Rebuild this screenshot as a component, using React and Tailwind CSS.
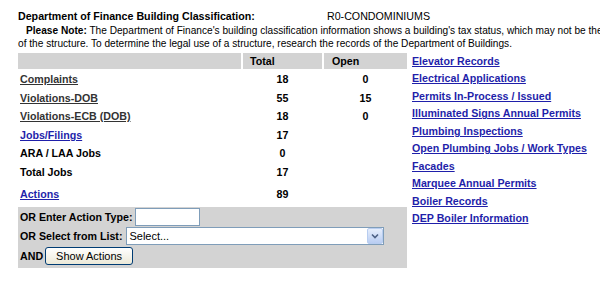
import { useState } from "react";

export default function App() {
  // filas de la tabla de resumen
  const rows = [
    { label: "Complaints", total: "18", open: "0", link: "gray" },
    { label: "Violations-DOB", total: "55", open: "15", link: "gray" },
    { label: "Violations-ECB (DOB)", total: "18", open: "0", link: "gray" },
    { label: "Jobs/Filings", total: "17", open: "", link: "blue" },
    { label: "ARA / LAA Jobs", total: "0", open: "", link: "" },
    { label: "Total Jobs", total: "17", open: "", link: "" },
  ];

  const links = [
    "Elevator Records",
    "Electrical Applications",
    "Permits In-Process / Issued",
    "Illuminated Signs Annual Permits",
    "Plumbing Inspections",
    "Open Plumbing Jobs / Work Types",
    "Facades",
    "Marquee Annual Permits",
    "Boiler Records",
    "DEP Boiler Information",
  ];

  const [actionType, setActionType] = useState("");
  const [selected, setSelected] = useState("");

  return (
    <div className="w-[600px] h-[293px] overflow-hidden bg-white pl-[18px] pt-[9px] font-['Liberation_Sans',Arial,sans-serif] text-black">
      <div className="flex h-[14px] items-center text-[8pt] leading-[14px]">
        <span className="w-[309px] font-bold">Department of Finance Building Classification:</span>
        <span>R0-CONDOMINIUMS</span>
      </div>

      <p className="mt-[1px] whitespace-nowrap text-[10.15px] leading-[13px]">
        <span className="pl-[8px] font-bold">Please Note:</span> The Department of Finance's building classification information shows a building's tax status, which may not be the legal use
        <br />
        of the structure. To determine the legal use of a structure, research the records of the Department of Buildings.
      </p>

      <div className="mt-[3px] flex gap-[5px] text-[8pt] font-bold">
        <div className="flex w-[389px] flex-col gap-[2px]">
          <div className="grid h-[16px] grid-cols-[223px_79px_83px] gap-x-[2px]">
            <div className="bg-[#d3d3d3]" />
            <div className="flex items-center bg-[#d3d3d3] pl-[7px]">Total</div>
            <div className="flex items-center bg-[#d3d3d3] pl-[8px]">Open</div>
          </div>

          {rows.map((r) => (
            <div key={r.label} className="grid h-[16.5px] grid-cols-[223px_79px_83px] items-center gap-x-[2px]">
              <div className="pl-[2px]">
                {r.link === "gray" && <a href="#" className="text-[#333333] underline">{r.label}</a>}
                {r.link === "blue" && <a href="#" className="text-[#1f1faa] underline">{r.label}</a>}
                {r.link === "" && <span>{r.label}</span>}
              </div>
              <div className="text-center">{r.total}</div>
              <div className="text-center">{r.open}</div>
            </div>
          ))}

          <div className="grid h-[23px] grid-cols-[223px_79px_83px] items-center gap-x-[2px]">
            <div className="pl-[2px]">
              <a href="#" className="text-[#1f1faa] underline">Actions</a>
            </div>
            <div className="text-center">89</div>
            <div />
          </div>

          {/* formulario de acciones */}
          <div className="flex h-[61px] flex-col bg-[#d3d3d3] pl-[2px] pt-[1px]">
            <div className="flex h-[18px] items-center">
              <span>OR Enter Action Type:</span>
              <input
                value={actionType}
                onChange={(e) => setActionType(e.target.value)}
                className="ml-[2px] h-[18px] w-[65px] border border-[#7f9db9] bg-white outline-none"
              />
            </div>
            <div className="mt-[1px] flex h-[18px] items-center">
              <span>OR Select from List:</span>
              <div className="relative ml-[4px] h-[18px] w-[258px]">
                <select
                  value={selected}
                  onChange={(e) => setSelected(e.target.value)}
                  className="h-[18px] w-full appearance-none rounded-none border border-[#7f9db9] bg-white pl-[2px] text-[11px] font-normal leading-[16px] outline-none"
                >
                  <option value="">Select...</option>
                </select>
                <div className="pointer-events-none absolute right-[1px] top-[1px] flex h-[16px] w-[16px] items-center justify-center rounded-[2px] border border-[#b8cdf0] bg-gradient-to-b from-[#e6eefc] to-[#b9cdf2]">
                  <svg width="8" height="6" viewBox="0 0 8 6">
                    <path d="M1 1.5 L4 4.5 L7 1.5" fill="none" stroke="#4d6185" strokeWidth="1.6" />
                  </svg>
                </div>
              </div>
            </div>
            <div className="mt-[2px] flex h-[18px] items-center">
              <span>AND</span>
              <button className="ml-[2px] h-[18px] w-[88px] rounded-[3px] border border-[#003c74] bg-gradient-to-b from-[#ffffff] to-[#ece9d8] text-[11px] font-normal leading-[16px] text-black">
                Show Actions
              </button>
            </div>
          </div>
        </div>

        <div className="flex flex-col leading-[17.45px]">
          {links.map((l) => (
            <a key={l} href="#" className="text-[#1f1faa] underline">{l}</a>
          ))}
        </div>
      </div>
    </div>
  );
}
